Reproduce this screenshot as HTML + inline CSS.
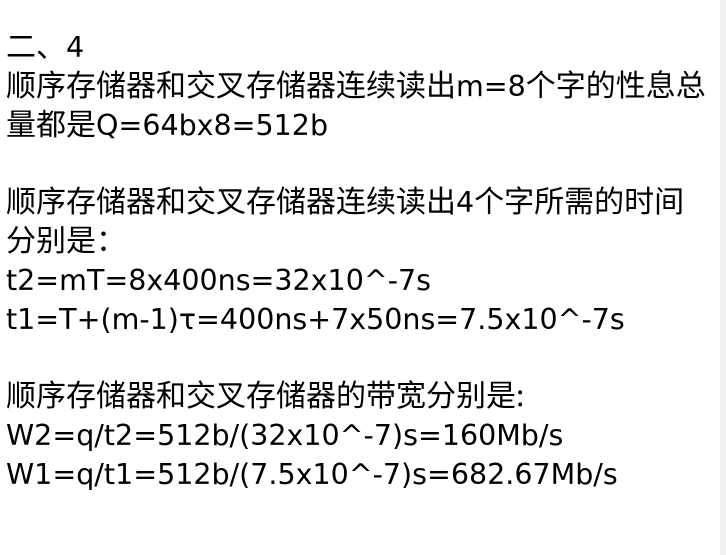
<!DOCTYPE html>
<html><head><meta charset="utf-8"><style>
html,body{margin:0;padding:0;background:#fff;}
body{width:726px;height:555px;overflow:hidden;position:relative;}
.strip{position:absolute;right:0;top:0;width:6px;height:555px;background:#f0f0f0;}
.t{position:absolute;left:6px;top:25px;font-family:"Noto Sans CJK SC",sans-serif;font-size:30px;color:#000;}
.t div{height:38.8px;line-height:38.8px;white-space:nowrap;}
.l{font-family:"DejaVu Sans",sans-serif;font-size:28.5px;line-height:1;}
</style></head><body>
<div class="t"><div>二、<span class="l">4</span></div><div>顺序存储器和交叉存储器连续读出<span class="l">m=8</span>个字的性息总</div><div>量都是<span class="l">Q=64bx8=512b</span></div><div></div><div>顺序存储器和交叉存储器连续读出<span class="l">4</span>个字所需的时间</div><div>分别是：</div><div><span class="l">t2=mT=8x400ns=32x10^-7s</span></div><div><span class="l">t1=T+(m-1)τ=400ns+7x50ns=7.5x10^-7s</span></div><div></div><div>顺序存储器和交叉存储器的带宽分别是:</div><div><span class="l">W2=q/t2=512b/(32x10^-7)s=160Mb/s</span></div><div><span class="l">W1=q/t1=512b/(7.5x10^-7)s=682.67Mb/s</span></div></div>
<div class="strip"></div>
</body></html>
